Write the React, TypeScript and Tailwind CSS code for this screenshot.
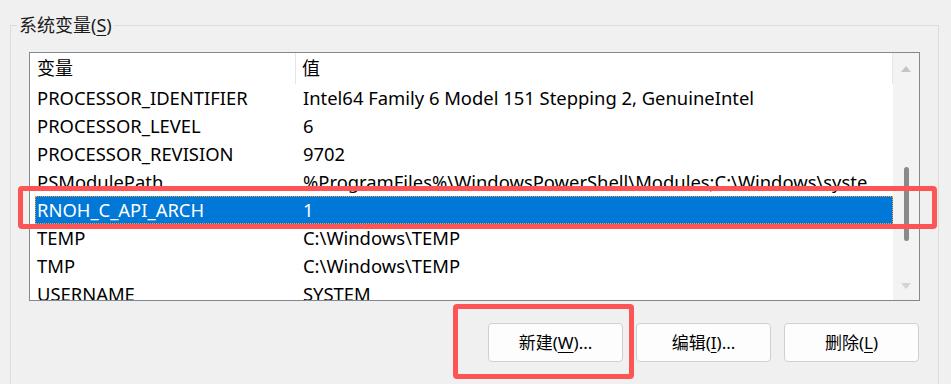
const rows = [
  { name: "PROCESSOR_IDENTIFIER", value: "Intel64 Family 6 Model 151 Stepping 2, GenuineIntel" },
  { name: "PROCESSOR_LEVEL", value: "6" },
  { name: "PROCESSOR_REVISION", value: "9702" },
  { name: "PSModulePath", value: "%ProgramFiles%\\WindowsPowerShell\\Modules;C:\\Windows\\system32\\WindowsPowerShell" },
  { name: "RNOH_C_API_ARCH", value: "1", selected: true },
  { name: "TEMP", value: "C:\\Windows\\TEMP" },
  { name: "TMP", value: "C:\\Windows\\TEMP" },
  { name: "USERNAME", value: "SYSTEM" },
]

const font = { fontFamily: '"Noto Sans", "Noto Sans CJK SC", sans-serif' }

const WinButton = ({ label, hotkey, suffix }: { label: string; hotkey: string; suffix: string }) => (
  <button className="w-[135px] h-[39px] rounded-[4px] border border-[#d0d0d0] bg-[#fdfdfd] text-[17px] text-black flex items-center justify-center">
    {label}(<span className="underline underline-offset-[3px]">{hotkey}</span>){suffix}
  </button>
)

export default function App() {
  return (
    <div className="w-[951px] h-[384px] bg-[#f0f0f0] overflow-hidden pt-[25px] pl-[10px]" style={font}>
      {/* group box */}
      <div className="relative w-[929px] h-[400px] border-l border-t border-r border-[#dcdcdc] pt-[26px] pl-[18px]">
        <span className="absolute left-[6px] -top-[14px] bg-[#f0f0f0] px-[2px] text-[18px] leading-[26px] text-[#1a1a1a]">
          系统变量(<span className="underline underline-offset-[3px]">S</span>)
        </span>

        {/* list view */}
        <div className="relative w-[891px] h-[249px] border border-[#828790] bg-white flex overflow-hidden">
          <div className="flex-1 min-w-0 flex flex-col">
            {/* header */}
            <div className="h-[31px] flex items-center text-[18px] text-black shrink-0 border-r border-[#e5e5e5]">
              <div className="w-[266px] pl-[7px] h-full flex items-center border-r border-[#e5e5e5]">变量</div>
              <div className="pl-[6px]">值</div>
            </div>
            {rows.map((r) => (
              <div
                key={r.name}
                className={`h-[28px] shrink-0 flex items-center text-[18.4px] whitespace-nowrap ml-[5px] ${
                  r.selected ? "bg-[#0078d7] text-white outline outline-1 outline-dotted outline-[#f0a040] -outline-offset-1" : "text-black"
                }`}
              >
                <div className="w-[266px] shrink-0 pl-[2px]">{r.name}</div>
                <div className="w-[566px] shrink-0 pl-[2px] overflow-hidden">{r.value}</div>
              </div>
            ))}
          </div>
          {/* scrollbar */}
          <div className="w-[26px] shrink-0 bg-[#f3f3f3] flex flex-col items-center pt-[12px] pb-[10px]">
            <svg width="12" height="8" viewBox="0 0 12 8"><path d="M1 7 L6 1 L11 7 Z" fill="#c4c4c4" /></svg>
            <div className="w-[5px] h-[74px] rounded-full bg-[#8a8a8a] mt-[94px]" />
            <div className="flex-1" />
            <svg width="12" height="8" viewBox="0 0 12 8"><path d="M1 1 L6 7 L11 1 Z" fill="#d4d4d4" /></svg>
          </div>
        </div>

        {/* buttons */}
        <div className="flex gap-[13px] justify-end pr-[19px] mt-[22px]">
          <WinButton label="新建" hotkey="W" suffix="..." />
          <WinButton label="编辑" hotkey="I" suffix="..." />
          <WinButton label="删除" hotkey="L" suffix="" />
        </div>

        {/* annotation boxes */}
        <div className="absolute left-[7px] top-[160px] w-[919px] h-[43px] border-[5px] border-[#fd5555] rounded-[4px]" />
        <div className="absolute left-[442px] top-[278px] w-[181px] h-[75px] border-[5px] border-[#fd5555] rounded-[4px]" />
      </div>
    </div>
  )
}
